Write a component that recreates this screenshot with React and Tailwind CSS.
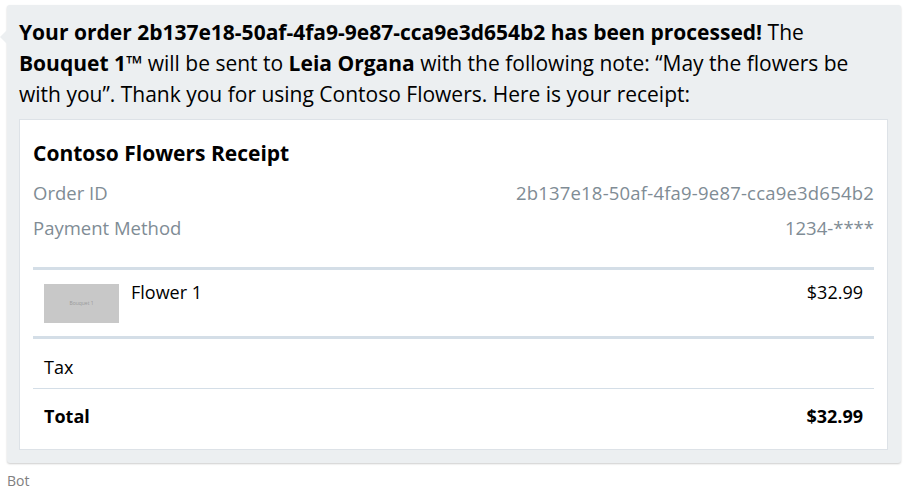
import React from "react";

export default function App() {
  return (
    <div className="w-[912px] h-[494px] bg-white relative overflow-hidden" style={{ fontFamily: '"Open Sans", "Noto Sans", sans-serif' }}>
      <div className="pl-[7px] pr-[11px] pt-[5px]">
        <div className="relative bg-[#eceff1] rounded-[3px] shadow-[0_1px_2px_rgba(0,0,0,0.2)] pl-[12px] pr-[13px] pt-[12px] pb-[13px]">
          <div className="absolute left-[-7px] top-[25px] w-0 h-0 border-y-[7px] border-y-transparent border-r-[7px] border-r-[#eceff1]" />
          <p className="text-[21px] leading-[31px] text-black">
            <b className="font-bold">Your order 2b137e18-50af-4fa9-9e87-cca9e3d654b2 has been processed!</b> The{" "}
            <b className="font-bold">Bouquet 1™</b> will be sent to <b className="font-bold">Leia Organa</b> with the following note: “May the flowers be with you”. Thank you for using Contoso Flowers. Here is your receipt:
          </p>
          <div className="mt-[9px] bg-white border border-[#dde2e7] px-[13px] pt-[19px]">
            <div className="text-[21px] leading-[28px] font-bold text-black">Contoso Flowers Receipt</div>
            <div className="mt-[8px] flex justify-between text-[18.5px] leading-[35px] text-[#808c95]">
              <span>Order ID</span>
              <span className="tracking-[0.2px]">2b137e18-50af-4fa9-9e87-cca9e3d654b2</span>
            </div>
            <div className="flex justify-between text-[18.5px] leading-[35px] text-[#808c95]">
              <span>Payment Method</span>
              <span>1234-****</span>
            </div>
            <div className="mt-[22px] border-t-[3px] border-[#d4dee7]" />
            <div className="flex items-start px-[11px] pt-[10px] pb-[13px]">
              <div className="mt-[4px] w-[75px] h-[39px] bg-[#c8c8c8] flex items-center justify-center text-[5px] text-[#999]">Bouquet 1</div>
              <div className="ml-[12px] flex-1 text-[18px] leading-[24px] text-black">Flower 1</div>
              <div className="text-[18px] leading-[24px] text-black">$32.99</div>
            </div>
            <div className="border-t-[3px] border-[#d4dee7]" />
            <div className="flex justify-between px-[11px] pt-[16px] pb-[9px] text-[18px] leading-[24px] text-black">
              <span>Tax</span>
              <span></span>
            </div>
            <div className="border-t border-[#d4dee7]" />
            <div className="flex justify-between px-[11px] pt-[15px] pb-[21px] text-[18px] leading-[24px] font-bold text-black">
              <span>Total</span>
              <span>$32.99</span>
            </div>
          </div>
        </div>
        <div className="mt-[8px] text-[14px] leading-[20px] text-[#808080]">Bot</div>
      </div>
    </div>
  );
}
